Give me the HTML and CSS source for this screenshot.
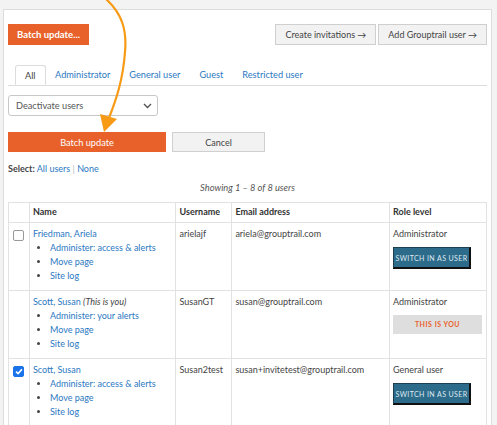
FILE: index.html
```html
<!DOCTYPE html>
<html lang="en">
<head>
    <meta charset="UTF-8">
    <title>Users</title>
    <link rel="stylesheet" href="styles.css">
</head>
<body>
    <div class="panel">
        <div class="toolbar">
            <button class="btn-orange btn-bold">Batch update...</button>
            <div class="toolbar-right">
                <button class="btn-grey">Create invitations &rarr;</button>
                <button class="btn-grey">Add Grouptrail user &rarr;</button>
            </div>
        </div>

        <ul class="tabs">
            <li class="active">All</li>
            <li><a href="#">Administrator</a></li>
            <li><a href="#">General user</a></li>
            <li><a href="#">Guest</a></li>
            <li><a href="#">Restricted user</a></li>
        </ul>

        <div class="select-box">
            <span>Deactivate users</span>
            <svg width="9" height="6" viewBox="0 0 9 6"><path d="M1 1 L4.5 4.5 L8 1" fill="none" stroke="#555" stroke-width="1.4"/></svg>
        </div>

        <div class="batch-actions">
            <button class="btn-orange btn-wide">Batch update</button>
            <button class="btn-grey btn-cancel">Cancel</button>
        </div>

        <p class="select-line"><b>Select:</b> <a href="#">All users</a> <span class="sep">|</span> <a href="#">None</a></p>

        <p class="showing">Showing 1 &ndash; 8 of 8 users</p>

        <table class="users">
            <thead>
                <tr>
                    <th class="col-check"></th>
                    <th class="col-name">Name</th>
                    <th class="col-user">Username</th>
                    <th class="col-email">Email address</th>
                    <th class="col-role">Role level</th>
                </tr>
            </thead>
            <tbody>
                <tr>
                    <td class="col-check"><span class="checkbox"></span></td>
                    <td>
                        <a href="#">Friedman, Ariela</a>
                        <ul class="actions">
                            <li><a href="#">Administer: access &amp; alerts</a></li>
                            <li><a href="#">Move page</a></li>
                            <li><a href="#">Site log</a></li>
                        </ul>
                    </td>
                    <td>arielajf</td>
                    <td>ariela@grouptrail.com</td>
                    <td>
                        Administrator
                        <button class="btn-switch">Switch in as user</button>
                    </td>
                </tr>
                <tr>
                    <td class="col-check"></td>
                    <td>
                        <a href="#">Scott, Susan</a> <i>(This is you)</i>
                        <ul class="actions">
                            <li><a href="#">Administer: your alerts</a></li>
                            <li><a href="#">Move page</a></li>
                            <li><a href="#">Site log</a></li>
                        </ul>
                    </td>
                    <td>SusanGT</td>
                    <td>susan@grouptrail.com</td>
                    <td>
                        Administrator
                        <div class="this-is-you">This is you</div>
                    </td>
                </tr>
                <tr>
                    <td class="col-check"><span class="checkbox checked"><svg width="8" height="7" viewBox="0 0 8 7"><path d="M1 3.6 L3.1 5.6 L7 1.2" fill="none" stroke="#fff" stroke-width="1.6"/></svg></span></td>
                    <td>
                        <a href="#">Scott, Susan</a>
                        <ul class="actions">
                            <li><a href="#">Administer: access &amp; alerts</a></li>
                            <li><a href="#">Move page</a></li>
                            <li><a href="#">Site log</a></li>
                        </ul>
                    </td>
                    <td>Susan2test</td>
                    <td>susan+invitetest@grouptrail.com</td>
                    <td>
                        General user
                        <button class="btn-switch">Switch in as user</button>
                    </td>
                </tr>
            </tbody>
        </table>
    </div>

    <!-- callout arrow pointing at the batch update button -->
    <svg class="callout" width="497" height="140" viewBox="0 0 497 140">
        <path d="M107 0 C122 14 127 30 125 52 C123 80 116 100 109 118" fill="none" stroke="#f79a16" stroke-width="2.2" stroke-linecap="round"/>
        <polygon points="100,114 117,119 104,132" fill="#f79a16"/>
    </svg>
</body>
</html>
```

FILE: styles.css
```css
body {
    margin: 0;
    background: #f3f3f3;
    font-family: Lato, "Open Sans", sans-serif;
    font-size: 9px;
    color: #444;
}

a {
    color: #2b78c2;
    text-decoration: none;
}

button {
    font-family: inherit;
    cursor: pointer;
}

.panel {
    margin: 9px 5px 0 3px;
    height: 420px;
    box-sizing: border-box;
    background: #fff;
    border: 1px solid #dcdcdc;
    padding: 14px 4px 0 4px;
}

.toolbar {
    display: flex;
    justify-content: space-between;
}

.toolbar-right {
    display: flex;
    gap: 2px;
}

.btn-orange {
    background: #e8612b;
    color: #fff;
    border: none;
    height: 21px;
    font-size: 9.5px;
}

.btn-bold {
    font-weight: bold;
    padding: 0 9px;
}

.btn-grey {
    background: #f2f2f2;
    color: #444;
    border: 1px solid #cfcfcf;
    height: 21px;
    font-size: 9px;
    padding: 0 9px;
}

.tabs {
    list-style: none;
    display: flex;
    margin: 20px 0 0 0;
    padding: 0 0 0 7px;
    border-bottom: 1px solid #dcdcdc;
    height: 20px;
}

.tabs li {
    padding: 0 9.5px;
    line-height: 20px;
    font-size: 9.2px;
}

.tabs li.active {
    border: 1px solid #dcdcdc;
    border-bottom: 1px solid #fff;
    border-radius: 3px 3px 0 0;
    background: #fff;
    line-height: 19px;
    padding: 0 9px;
}

.select-box {
    margin-top: 9px;
    width: 150px;
    height: 21px;
    box-sizing: border-box;
    border: 1px solid #c8c8c8;
    border-radius: 3px;
    display: flex;
    align-items: center;
    justify-content: space-between;
    padding: 0 5px 0 7px;
    font-size: 9.2px;
    color: #555;
}

.batch-actions {
    display: flex;
    gap: 6px;
    margin-top: 16px;
}

.btn-wide {
    width: 158px;
    height: 20px;
    font-size: 9.2px;
}

.btn-cancel {
    width: 93px;
    height: 20px;
}

.select-line {
    margin: 10px 0 0 0;
    line-height: 14px;
}

.select-line .sep {
    color: #bbb;
}

.showing {
    margin: 5px 0 0 0;
    text-align: center;
    font-style: italic;
    font-size: 9.3px;
    line-height: 14px;
    color: #555;
}

.users {
    margin-top: 7px;
    width: 479px;
    border-collapse: collapse;
    line-height: 14px;
}

.users th,
.users td {
    border: 1px solid #e2e2e2;
    text-align: left;
    vertical-align: top;
    padding: 4px 4px 7px 3px;
}

.users th {
    padding: 2px 3px 3px 3px;
    font-weight: bold;
    color: #333;
}

.col-check { width: 12px; }
.col-name { width: 141px; }
.col-user { width: 49px; }
.col-email { width: 151px; }

td.col-check {
    padding: 7px 4px 0 4px;
}

.checkbox {
    display: flex;
    align-items: center;
    justify-content: center;
    width: 9px;
    height: 9px;
    border: 1px solid #999;
    border-radius: 2px;
    background: #fff;
}

.checkbox.checked {
    background: #1a73e8;
    border-color: #1a73e8;
}

.actions {
    margin: 0;
    padding-left: 17px;
}

.btn-switch {
    display: block;
    margin-top: 6px;
    width: 78px;
    height: 22px;
    background: #2d6b8b;
    color: #dfe9ef;
    border: 1px solid #1d3f52;
    border-right: 2px solid #111;
    border-bottom: 2px solid #111;
    font-size: 7px;
    letter-spacing: 0.4px;
    text-transform: uppercase;
    padding: 0;
}

.this-is-you {
    margin-top: 6px;
    width: 89px;
    height: 19px;
    line-height: 19px;
    background: #dedede;
    color: #e8612b;
    font-weight: bold;
    font-size: 7px;
    letter-spacing: 0.5px;
    text-transform: uppercase;
    text-align: center;
}

.callout {
    position: absolute;
    left: 0;
    top: 0;
    pointer-events: none;
}
```
